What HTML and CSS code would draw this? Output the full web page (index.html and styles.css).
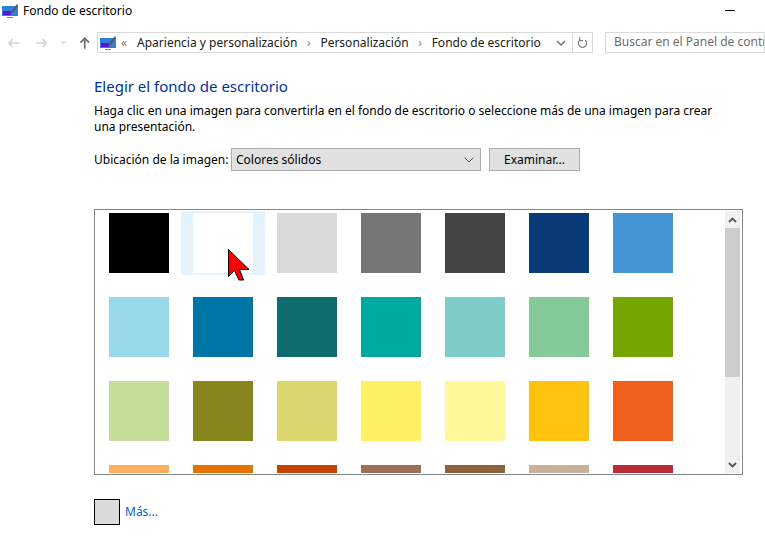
FILE: index.html
```html
<!DOCTYPE html>
<html lang="es">
<head>
<meta charset="utf-8">
<title>Fondo de escritorio</title>
<link rel="stylesheet" href="styles.css">
</head>
<body>
<header class="titlebar">
  <svg class="app-icon" viewBox="0 0 16 16"><rect x="0" y="3" width="16" height="10" fill="#2f7fd6"/><rect x="1" y="8" width="8" height="4" fill="#5a14d8"/><path d="M9 9 15 1l1 1-5 8z" fill="#555"/><rect x="5" y="14" width="6" height="1" fill="#888"/></svg>
  <span class="title">Fondo de escritorio</span>
  <span class="minimize"></span>
</header>
<nav class="navbar">
  <svg class="nav-arrow" viewBox="0 0 14 12"><path d="M13 6H2M6 2 2 6l4 4" fill="none" stroke="#d4d4d4" stroke-width="1.6"/></svg>
  <svg class="nav-arrow fwd" viewBox="0 0 14 12"><path d="M1 6h11M8 2l4 4-4 4" fill="none" stroke="#d4d4d4" stroke-width="1.6"/></svg>
  <svg class="nav-drop" viewBox="0 0 7 5"><path d="M1 1l2.5 2.5L6 1" fill="none" stroke="#d4d4d4" stroke-width="1.2"/></svg>
  <svg class="nav-up" viewBox="0 0 12 14"><path d="M6 13V2M1.5 6.5 6 2l4.500 4.500" fill="none" stroke="#6d6d6d" stroke-width="1.8"/></svg>
  <div class="address">
    <svg class="addr-icon" viewBox="0 0 16 16"><rect x="0" y="3" width="16" height="10" fill="#2f7fd6"/><rect x="1" y="8" width="8" height="4" fill="#5a14d8"/><path d="M9 9 15 1l1 1-5 8z" fill="#555"/><rect x="5" y="14" width="6" height="1" fill="#888"/></svg>
    <span class="crumb-more">«</span>
    <span class="crumb">Apariencia y personalización</span>
    <span class="crumb-sep">›</span>
    <span class="crumb">Personalización</span>
    <span class="crumb-sep">›</span>
    <span class="crumb">Fondo de escritorio</span>
    <svg class="addr-drop" viewBox="0 0 10 6"><path d="M1 1l4 4 4-4" fill="none" stroke="#6d6d6d" stroke-width="1.4"/></svg>
    <span class="addr-refresh">
      <svg viewBox="0 0 12 14" class="refresh-icon"><path d="M3 4.500a4.500 4.500 0 1 0 6 0M3 1.500v3.500h3.500" fill="none" stroke="#7a7a7a" stroke-width="1.300"/></svg>
    </span>
  </div>
  <div class="search">Buscar en el Panel de control</div>
</nav>
<main class="content">
  <h1 class="heading">Elegir el fondo de escritorio</h1>
  <p class="intro">Haga clic en una imagen para convertirla en el fondo de escritorio o seleccione más de una imagen para crear una presentación.</p>
  <div class="location">
    <span class="loc-label">Ubicación de la imagen:</span>
    <div class="combo">
      <span>Colores sólidos</span>
      <svg class="combo-arrow" viewBox="0 0 10 6"><path d="M.5.500 5 5 9.500.500" fill="none" stroke="#555" stroke-width="1"/></svg>
    </div>
    <div class="browse">Examinar...</div>
  </div>
  <div class="listbox">
    <div class="swatches">
      <div class="cell"><span class="swatch c1"></span></div>
      <div class="cell hover"><span class="swatch c2"></span></div>
      <div class="cell"><span class="swatch c3"></span></div>
      <div class="cell"><span class="swatch c4"></span></div>
      <div class="cell"><span class="swatch c5"></span></div>
      <div class="cell"><span class="swatch c6"></span></div>
      <div class="cell"><span class="swatch c7"></span></div>
      <div class="cell"><span class="swatch c8"></span></div>
      <div class="cell"><span class="swatch c9"></span></div>
      <div class="cell"><span class="swatch c10"></span></div>
      <div class="cell"><span class="swatch c11"></span></div>
      <div class="cell"><span class="swatch c12"></span></div>
      <div class="cell"><span class="swatch c13"></span></div>
      <div class="cell"><span class="swatch c14"></span></div>
      <div class="cell"><span class="swatch c15"></span></div>
      <div class="cell"><span class="swatch c16"></span></div>
      <div class="cell"><span class="swatch c17"></span></div>
      <div class="cell"><span class="swatch c18"></span></div>
      <div class="cell"><span class="swatch c19"></span></div>
      <div class="cell"><span class="swatch c20"></span></div>
      <div class="cell"><span class="swatch c21"></span></div>
      <div class="cell"><span class="swatch c22"></span></div>
      <div class="cell"><span class="swatch c23"></span></div>
      <div class="cell"><span class="swatch c24"></span></div>
      <div class="cell"><span class="swatch c25"></span></div>
      <div class="cell"><span class="swatch c26"></span></div>
      <div class="cell"><span class="swatch c27"></span></div>
      <div class="cell"><span class="swatch c28"></span></div>
    </div>
    <div class="scrollbar">
      <div class="sb-btn"><svg viewBox="0 0 9 6" class="sb-arrow"><path d="M1 5l3.500-3.500L8 5" fill="none" stroke="#555" stroke-width="1.800"/></svg></div>
      <div class="sb-thumb"></div>
      <div class="sb-track"></div>
      <div class="sb-btn"><svg viewBox="0 0 9 6" class="sb-arrow"><path d="M1 1l3.500 3.500L8 1" fill="none" stroke="#555" stroke-width="1.800"/></svg></div>
    </div>
  </div>
  <div class="more">
    <span class="more-swatch"></span>
    <a class="more-link">Más...</a>
  </div>
</main>
<svg class="cursor" viewBox="0 0 21 32"><path d="M.5.500v27l6-6 4.500 9.500h4.500l-4-10.500h9.500z" fill="#f00" stroke="#000" stroke-width="1"/></svg>
</body>
</html>
```

FILE: styles.css
```css
* { box-sizing: border-box; }
html, body { margin: 0; height: 100%; }
body {
  position: relative;
  width: 765px;
  height: 543px;
  overflow: hidden;
  background: #fff;
  color: #000;
  font: 12px/16px "Noto Sans", "Open Sans", sans-serif;
}
.titlebar {
  display: flex;
  align-items: center;
  height: 22px;
  padding: 0 30px 0 2px;
}
.app-icon { width: 16px; height: 16px; margin-right: 5px; }
.title { flex: 1; }
.minimize { width: 10px; height: 1px; background: #000; margin-bottom: 2px; }
.navbar {
  display: flex;
  align-items: center;
  height: 21px;
  margin-top: 10px;
  padding-left: 7px;
}
.nav-arrow { width: 14px; height: 12px; }
.nav-arrow.fwd { margin-left: 15px; }
.nav-drop { width: 7px; height: 5px; margin-left: 11px; }
.nav-up { width: 12px; height: 14px; margin-left: 12px; margin-right: 7px; }
.address {
  display: flex;
  align-items: center;
  width: 517px;
  height: 21px;
  border: 1px solid #d9d9d9;
  padding-left: 2px;
  color: #1a1a1a;
}
.addr-icon { width: 16px; height: 16px; margin-right: 5px; }
.crumb-more { color: #777; width: 16px; }
.crumb-sep { color: #888; width: 23px; text-align: center; }
.addr-drop { width: 10px; height: 6px; margin-left: auto; margin-right: 6px; }
.addr-refresh {
  display: flex;
  align-items: center;
  justify-content: center;
  width: 20px;
  height: 19px;
  border-left: 1px solid #d9d9d9;
}
.refresh-icon { width: 11px; height: 13px; }
.search {
  flex: none;
  width: 160px;
  height: 21px;
  margin-left: 12px;
  padding: 1px 0 0 8px;
  border: 1px solid #d9d9d9;
  color: #6d6d6d;
  white-space: nowrap;
  overflow: hidden;
}
.content { padding: 0 22px 0 94px; }
.heading {
  margin: 23px 0 0;
  font-size: 15px;
  font-weight: 400;
  line-height: 20px;
  color: #003399;
}
.intro { margin: 7px 0 0; width: 640px; }
.location {
  display: flex;
  align-items: center;
  margin-top: 13px;
}
.loc-label { width: 137px; }
.combo {
  display: flex;
  align-items: center;
  justify-content: space-between;
  width: 250px;
  height: 23px;
  padding: 0 3px 0 4px;
  background: #e1e1e1;
  border: 1px solid #adadad;
}
.combo-arrow { width: 10px; height: 6px; margin-right: 3px; }
.browse {
  width: 91px;
  height: 23px;
  margin-left: 8px;
  background: #e1e1e1;
  border: 1px solid #adadad;
  text-align: center;
  line-height: 21px;
}
.listbox {
  display: flex;
  justify-content: space-between;
  width: 649px;
  height: 266px;
  margin-top: 38px;
  padding: 1px 2px 1px 1px;
  border: 1px solid #82878c;
  overflow: hidden;
}
.swatches {
  display: grid;
  grid-template-columns: repeat(7, 84px);
  grid-auto-rows: 84px;
  padding: 0 0 0 1px;
  overflow: hidden;
}
.cell {
  display: flex;
  justify-content: center;
  padding-top: 2px;
  height: 64px;
}
.cell.hover { background: #e5f3ff; }
.swatch { width: 60px; height: 60px; display: block; }
.scrollbar {
  display: flex;
  flex-direction: column;
  width: 15px;
  flex: none;
  background: #f0f0f0;
}
.sb-btn {
  flex: none;
  height: 17px;
  display: flex;
  align-items: center;
  justify-content: center;
}
.sb-arrow { width: 9px; height: 6px; }
.sb-thumb { flex: none; height: 149px; background: #cdcdcd; }
.sb-track { flex: 1; }
.more {
  display: flex;
  align-items: center;
  margin-top: 24px;
}
.more-swatch {
  width: 26px;
  height: 26px;
  border: 1px solid #000;
  background: #dadada;
  margin-right: 5px;
}
.more-link { color: #0066cc; }
.cursor {
  position: absolute;
  left: 228px;
  top: 249px;
  width: 21px;
  height: 32px;
}
.c1 { background: #000; }
.c2 { background: #fff; }
.c3 { background: #dadada; }
.c4 { background: #767676; }
.c5 { background: #444; }
.c6 { background: #0a3a78; }
.c7 { background: #4594d4; }
.c8 { background: #9ad9ec; }
.c9 { background: #0076a8; }
.c10 { background: #0e6b6e; }
.c11 { background: #00a99d; }
.c12 { background: #7dccc8; }
.c13 { background: #84c99a; }
.c14 { background: #76a500; }
.c15 { background: #c6de9a; }
.c16 { background: #88861f; }
.c17 { background: #dbd76f; }
.c18 { background: #fff166; }
.c19 { background: #fff799; }
.c20 { background: #ffc20e; }
.c21 { background: #ee611c; }
.c22 { background: #ffb05f; }
.c23 { background: #e57200; }
.c24 { background: #c24400; }
.c25 { background: #9f6e55; }
.c26 { background: #8b6239; }
.c27 { background: #c7b299; }
.c28 { background: #b92a37; }
```
